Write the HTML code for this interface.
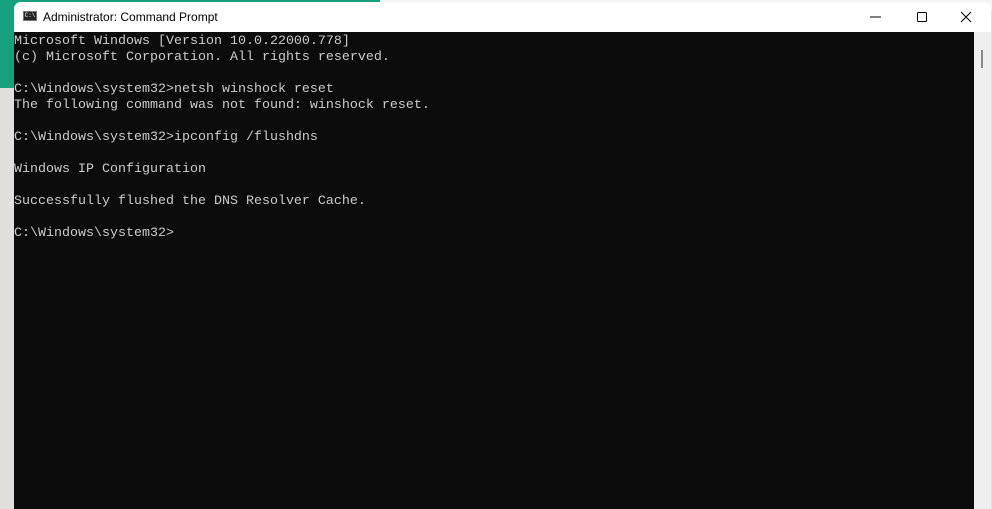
<!DOCTYPE html>
<html><head><style>
html,body{margin:0;padding:0;width:992px;height:509px;overflow:hidden;background:#e0dfdb;}
.bg1{position:absolute;left:0;top:0;width:380px;height:88px;background:#17a07e;}
.bg2{position:absolute;left:380px;top:0;width:612px;height:10px;background:#f4f4f4;}
.win{position:absolute;left:14px;top:2px;width:977px;height:507px;background:#fff;border-radius:7px 7px 0 0;overflow:hidden;}
.title{position:absolute;left:0;top:0;width:100%;height:30px;background:#fff;font:12px "Liberation Sans",sans-serif;color:#000;}
.title .t{position:absolute;left:29px;top:8px;}
.icon{position:absolute;left:9px;top:9px;width:14px;height:10px;background:#222;border:1px solid #777;box-sizing:border-box;color:#fff;font:6px "Liberation Mono",monospace;line-height:8px;text-align:center;}
.term{position:absolute;left:0;top:30px;width:960px;height:480px;background:#0c0c0c;}
.sb{position:absolute;left:960px;top:30px;width:17px;height:480px;background:#efefef;}
.thumb{position:absolute;left:967px;top:48px;width:2px;height:18px;background:#8a8a8a;}
pre{margin:0;position:absolute;left:0;top:2px;font:13.33px/16px "Liberation Mono",monospace;color:#cccccc;}
svg{position:absolute;}
</style></head><body>
<div class="bg1"></div><div class="bg2"></div>
<div class="win">
 <div class="title"><div class="icon">C:\</div><span class="t">Administrator: Command Prompt</span>
  <svg style="left:856px;top:14px" width="12" height="2"><line x1="0" y1="1" x2="11" y2="1" stroke="#000" stroke-width="1"/></svg>
  <svg style="left:902px;top:9px" width="12" height="12"><rect x="1.5" y="1.5" width="9" height="9" fill="none" stroke="#000" rx="1"/></svg>
  <svg style="left:946px;top:9px" width="12" height="12"><path d="M1 1L11 11M11 1L1 11" stroke="#000" stroke-width="1"/></svg>
 </div>
 <div class="term"><pre>Microsoft Windows [Version 10.0.22000.778]
(c) Microsoft Corporation. All rights reserved.

C:\Windows\system32&gt;netsh winshock reset
The following command was not found: winshock reset.

C:\Windows\system32&gt;ipconfig /flushdns

Windows IP Configuration

Successfully flushed the DNS Resolver Cache.

C:\Windows\system32&gt;</pre></div>
 <div class="sb"></div><div class="thumb"></div>
</div>
</body></html>
